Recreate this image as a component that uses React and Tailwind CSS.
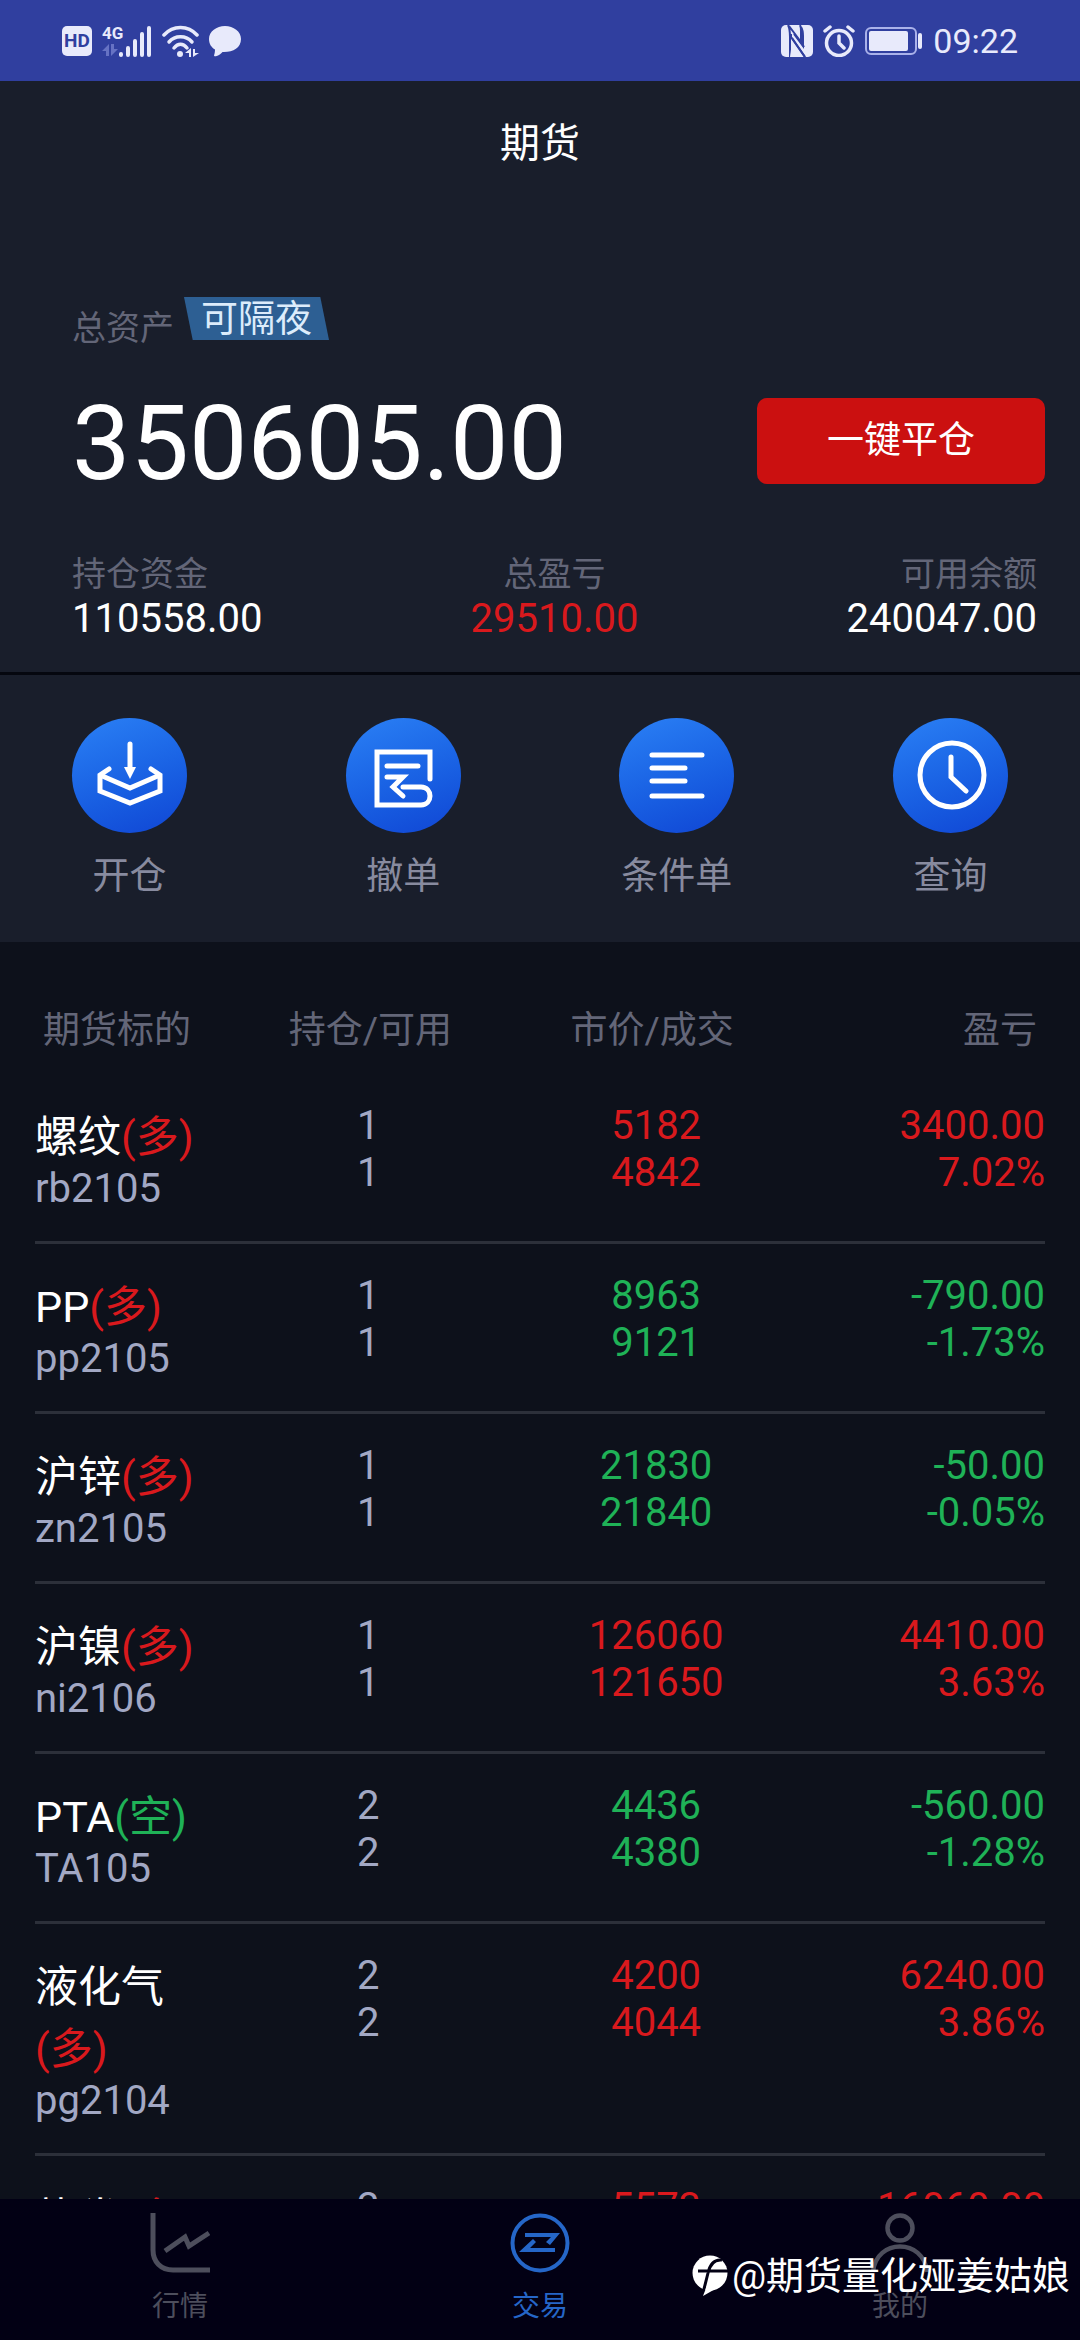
const stats = [
  { label: "持仓资金", value: "110558.00", align: "text-left", color: "text-white" },
  { label: "总盈亏", value: "29510.00", align: "text-center", color: "text-[#d9191d]" },
  { label: "可用余额", value: "240047.00", align: "text-right", color: "text-white" },
];

const positions = [
  { name: "螺纹", side: "多", code: "rb2105", hold: 1, usable: 1, price: "5182", cost: "4842", profit: "3400.00", rate: "7.02%" },
  { name: "PP", side: "多", code: "pp2105", hold: 1, usable: 1, price: "8963", cost: "9121", profit: "-790.00", rate: "-1.73%" },
  { name: "沪锌", side: "多", code: "zn2105", hold: 1, usable: 1, price: "21830", cost: "21840", profit: "-50.00", rate: "-0.05%" },
  { name: "沪镍", side: "多", code: "ni2106", hold: 1, usable: 1, price: "126060", cost: "121650", profit: "4410.00", rate: "3.63%" },
  { name: "PTA", side: "空", code: "TA105", hold: 2, usable: 2, price: "4436", cost: "4380", profit: "-560.00", rate: "-1.28%" },
  { name: "液化气", side: "多", code: "pg2104", hold: 2, usable: 2, price: "4200", cost: "4044", profit: "6240.00", rate: "3.86%" },
  { name: "热卷", side: "多", code: "hc2105", hold: 2, usable: 2, price: "5573", cost: "4770", profit: "16060.00", rate: "16.83%" },
];

const StatusBar = () => (
  <div className="flex h-[81px] shrink-0 items-center justify-between bg-[#303f9f] px-[62px] text-[#e8eafb]">
    <div className="flex items-center gap-[10px]">
      <span className="flex h-[30px] w-[30px] items-center justify-center rounded-[5px] bg-[#e8eafb] text-[19px] leading-none font-bold text-[#303f9f]">
        HD
      </span>
      <svg className="h-[34px] w-[50px]" viewBox="0 0 50 34" aria-label="4G">
        <text x="0" y="15" fontSize="17" fontWeight="700" fill="currentColor" fontFamily="Roboto, sans-serif">4G</text>
        <path d="M0 27l7-7v12H4v-5zM9 20h3v5h4l-7 7z" fill="#6672c4" />
        <path
          d="M19 30v1M26 24v7M33 17v14M40 10v21M47 4v27"
          stroke="currentColor"
          strokeWidth="4"
          strokeLinecap="round"
        />
      </svg>
      <svg className="h-[34px] w-[37px]" viewBox="0 0 37 34" fill="none" stroke="currentColor">
        <path d="M2 11C11 1 26 1 35 11" strokeWidth="3.500" strokeLinecap="round" />
        <path d="M7 18C13 11 24 11 30 18" strokeWidth="3.500" strokeLinecap="round" />
        <path d="M12 24C16 19 21 19 25 24" strokeWidth="3.500" strokeLinecap="round" />
        <circle cx="18" cy="30" r="3" fill="currentColor" stroke="none" />
        <path d="M23 29l6-5v9h-2v-4zM31 25h2v4h4l-6 4z" fill="currentColor" stroke="none" />
      </svg>
      <svg className="h-8 w-8" viewBox="0 0 32 32" fill="currentColor">
        <path d="M16 1C7.500 1 0 6.500 0 14c0 5 2.500 8.500 6 10.500 0 2.500-0.500 4.500-1 6 0.500 1 1 1 2 0.700 3-0.700 5-2.700 6.500-4.200C23.500 27.500 32 23 32 14 32 6.500 24.500 1 16 1z" />
      </svg>
    </div>
    <div className="flex items-center gap-[10px]">
      <svg className="h-8 w-8" viewBox="0 0 32 32" fill="none">
        <rect width="32" height="32" rx="5" fill="currentColor" />
        <path d="M7 0c2 4 2 7 2 12v20M8 1l12 16V6c0-3 0-4-1-6M10 9v3l14 20M20 17l3 5" stroke="#303f9f" strokeWidth="2" />
        <path d="M11 17l10 15H9z" fill="currentColor" />
        <path d="M11 13l13 19M20 2c2 3 2 5 2 9v10l-9-12" stroke="#303f9f" strokeWidth="2" />
      </svg>
      <svg className="h-8 w-8" viewBox="0 0 32 32" fill="none" stroke="currentColor" strokeWidth="3.500" strokeLinecap="round">
        <circle cx="16" cy="18" r="12.500" />
        <path d="M16 11v7l5 5M2 6l5-4M30 6l-5-4" />
      </svg>
      <svg className="h-[30px] w-[58px]" viewBox="0 0 58 30" fill="none">
        <rect x="1" y="2" width="50" height="26" rx="5" stroke="#aab2ea" strokeWidth="2" />
        <rect x="4" y="5" width="39" height="20" rx="2" fill="currentColor" />
        <rect x="53" y="7" width="4" height="16" rx="2" fill="currentColor" />
      </svg>
      <span className="text-[34px] leading-none">09:22</span>
    </div>
  </div>
);

const OpenIcon = () => (
  <>
    <path d="M58 26v26" strokeLinecap="round" />
    <path d="M52 49h12l-6 12z" fill="white" stroke="none" />
    <path d="M37 51l-9 6v16l30 12 30-12V57l-9-6" strokeLinecap="round" />
    <path d="M28 57l30 13 30-13" />
  </>
);

const CancelIcon = () => (
  <>
    <path d="M84 61V34H31v53h44c12 0 12-18 0-18H57" strokeLinecap="round" />
    <path d="M41 48h31M41 59h16L47 69l10 9" strokeLinecap="round" />
  </>
);

const ConditionIcon = () => (
  <path d="M33 37h50M33 50h33M33 63h33M33 78h50" strokeLinecap="round" />
);

const QueryIcon = () => (
  <>
    <circle cx="59" cy="57" r="32" />
    <path d="M58 39v20l15 14" strokeLinecap="round" />
  </>
);

const actions = [
  { label: "开仓", icon: <OpenIcon /> },
  { label: "撤单", icon: <CancelIcon /> },
  { label: "条件单", icon: <ConditionIcon /> },
  { label: "查询", icon: <QueryIcon /> },
];

const PositionRow = ({ item }) => {
  const color = item.profit.startsWith("-") ? "text-[#1fb257]" : "text-[#d9191d]";

  return (
    <tr className="border-b-[3px] border-[#2c303a] align-top text-[40px] leading-[47px]">
      <td className="pt-8 pr-2 pb-[31px] text-[#a2a8c4]">
        <div className="text-[43px] leading-[62px] text-white">
          {item.name}
          <span className={`inline-block ${item.side === "多" ? "text-[#d9191d]" : "text-[#1fb257]"}`}>
            ({item.side})
          </span>
        </div>
        <div className="leading-[42px]">{item.code}</div>
      </td>
      <td className="pt-7 text-center text-[#a2a8c4]">
        <div>{item.hold}</div>
        <div>{item.usable}</div>
      </td>
      <td className={`pt-7 text-center ${color}`}>
        <div>{item.price}</div>
        <div>{item.cost}</div>
      </td>
      <td className={`pt-7 text-right ${color}`}>
        <div>{item.profit}</div>
        <div>{item.rate}</div>
      </td>
    </tr>
  );
};

const TabBar = () => (
  <nav className="relative z-10 grid h-[141px] shrink-0 grid-cols-3 bg-[#020014] text-[28px] leading-10 text-[#4d4e5c]">
    <a href="#quotes" className="flex flex-col items-center gap-[14px] pt-[14px]">
      <svg className="h-[60px] w-[60px]" viewBox="0 0 60 60" fill="none" stroke="currentColor" strokeWidth="5">
        <path d="M3 0v37c0 12 8 20 20 20h37" />
        <path d="M15 38l20-14 4 9 20-13" />
      </svg>
      行情
    </a>
    <a href="#trade" className="flex flex-col items-center gap-[14px] pt-[14px] text-[#2566c8]">
      <svg className="h-[60px] w-[60px]" viewBox="0 0 60 60" fill="currentColor">
        <circle cx="30" cy="30" r="27.500" fill="none" stroke="currentColor" strokeWidth="4" />
        <path d="M15 20h35L40 32l-4-3 5-5H15z" />
        <path d="M45 39H9l14-13 3 3-6 6h25z" />
      </svg>
      交易
    </a>
    <a href="#mine" className="flex flex-col items-center gap-[14px] pt-[14px]">
      <svg className="h-[60px] w-[60px]" viewBox="0 0 60 60" fill="none" stroke="currentColor" strokeWidth="4.500">
        <circle cx="30" cy="15" r="12.500" />
        <path d="M3 59c3-34 51-34 54 0" />
      </svg>
      我的
    </a>
    <div className="absolute right-[10px] bottom-9 flex items-center gap-1 text-[38px] leading-[56px] text-white">
      <svg className="h-[42px] w-9" viewBox="0 0 36 42" fill="none">
        <circle cx="18" cy="18" r="17.500" fill="currentColor" />
        <path d="M6 16h30M11 38l5-20C18 9 22 4 30 5" stroke="#020014" strokeWidth="3" />
        <path d="M16 28l-5 13 14-8z" fill="currentColor" />
      </svg>
      @期货量化娅姜姑娘
    </div>
  </nav>
);

const App = () => {
  return (
    <div className="flex h-screen flex-col overflow-hidden bg-[#0d111b] font-['Roboto','Noto_Sans_CJK_SC',sans-serif]">
      <StatusBar />
      <main className="min-h-0 flex-1 overflow-hidden">
        <section className="border-b-[3px] border-[#05070f] bg-[#191e2b]">
          <h1 className="pt-[34px] text-center text-[40px] leading-[58px] text-white">期货</h1>
          <div className="flex items-start gap-[10px] pt-[124px] pl-[72px]">
            <span className="pt-1.5 text-[34px] leading-[50px] text-[#636678]">总资产</span>
            <span className="bg-[#2d5f93] px-[17px] pt-0.5 text-[37px] leading-[41px] text-[#dcecfb] [clip-path:polygon(0_0,94%_0,100%_100%,6%_100%)]">
              可隔夜
            </span>
          </div>
          <div className="flex items-start justify-between pt-[30px] pr-[35px] pl-[72px]">
            <span className="text-[104px] leading-[122px] text-white">350605.00</span>
            <button className="mt-[15px] h-[86px] w-72 rounded-[10px] bg-[#cb1010] text-[37px] leading-[54px] text-white">
              一键平仓
            </button>
          </div>
          <div className="flex justify-between pt-12 pr-[43px] pb-[30px] pl-[72px]">
            {stats.map((stat) => (
              <div key={stat.label} className={stat.align}>
                <div className="text-[34px] leading-[42px] text-[#636678]">{stat.label}</div>
                <div className={`text-[40px] leading-[47px] ${stat.color}`}>{stat.value}</div>
              </div>
            ))}
          </div>
        </section>

        <section className="flex justify-between bg-[#191e2b] px-[72px] pt-[43px] pb-[38px]">
          {actions.map((action) => (
            <button key={action.label} className="flex flex-col items-center gap-[17px] text-[37px] leading-[54px] text-[#888b9f]">
              <span className="rounded-full bg-linear-160 from-[#2b80f5] to-[#1145d4]">
                <svg className="h-[115px] w-[115px]" viewBox="0 0 115 115" fill="none" stroke="white" strokeWidth="5">
                  {action.icon}
                </svg>
              </span>
              {action.label}
            </button>
          ))}
        </section>

        <section className="px-[35px]">
          <table className="w-full table-fixed border-collapse">
            <thead>
              <tr className="text-[37px] leading-[54px] text-[#636678]">
                <th className="w-[20%] pt-[62px] pb-4 pl-2 text-left font-normal whitespace-nowrap">期货标的</th>
                <th className="w-[26%] pt-[62px] pb-4 pl-1 text-center font-normal">持仓/可用</th>
                <th className="w-[31%] pt-[62px] pr-2 pb-4 text-center font-normal">市价/成交</th>
                <th className="w-[23%] pt-[62px] pr-2 pb-4 text-right font-normal">盈亏</th>
              </tr>
            </thead>
            <tbody>
              {positions.map((item) => (
                <PositionRow key={item.code} item={item} />
              ))}
            </tbody>
          </table>
        </section>
      </main>
      <TabBar />
    </div>
  );
};

export default App;
